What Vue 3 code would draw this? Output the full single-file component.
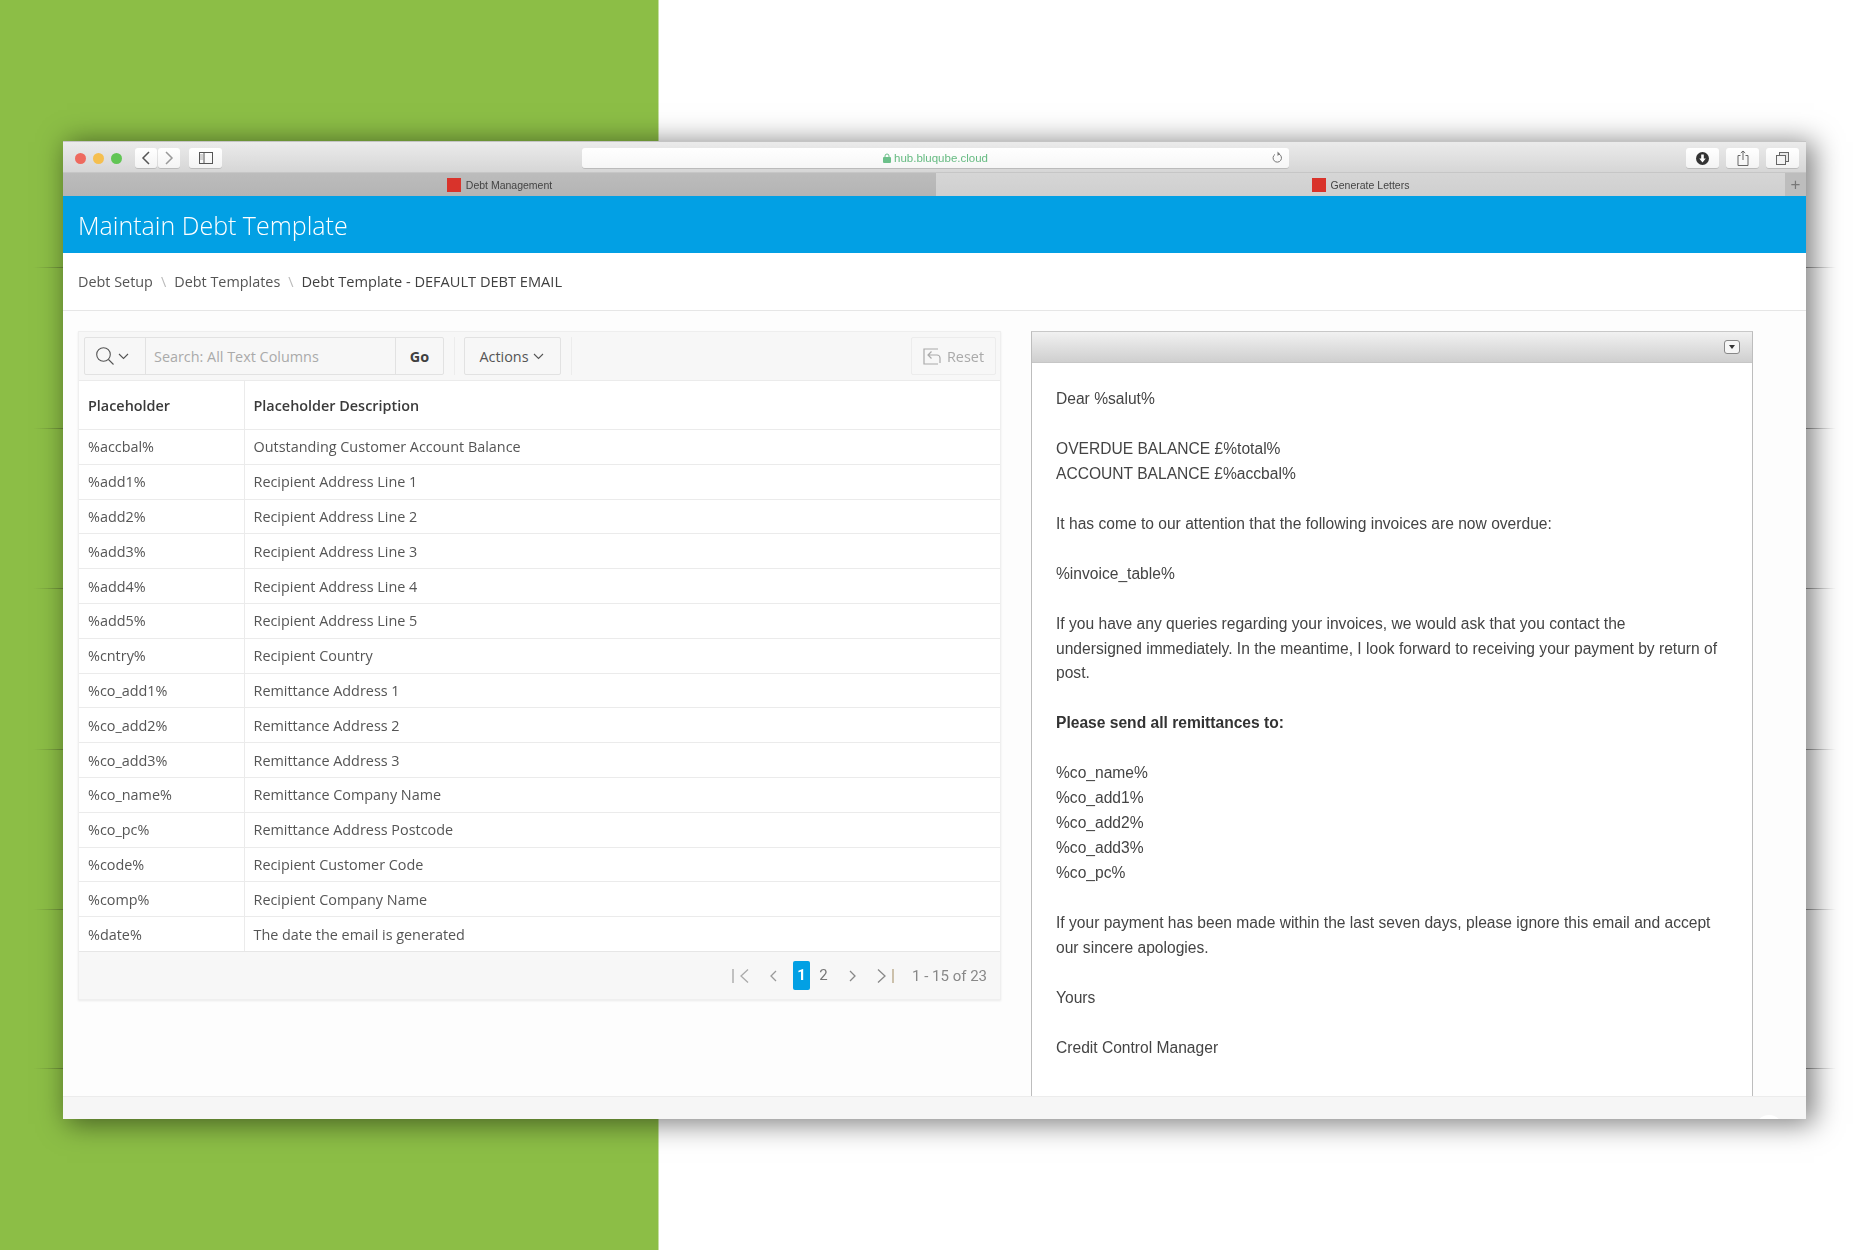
<script setup>
const rows = [
  ['%accbal%', 'Outstanding Customer Account Balance'],
  ['%add1%', 'Recipient Address Line 1'],
  ['%add2%', 'Recipient Address Line 2'],
  ['%add3%', 'Recipient Address Line 3'],
  ['%add4%', 'Recipient Address Line 4'],
  ['%add5%', 'Recipient Address Line 5'],
  ['%cntry%', 'Recipient Country'],
  ['%co_add1%', 'Remittance Address 1'],
  ['%co_add2%', 'Remittance Address 2'],
  ['%co_add3%', 'Remittance Address 3'],
  ['%co_name%', 'Remittance Company Name'],
  ['%co_pc%', 'Remittance Address Postcode'],
  ['%code%', 'Recipient Customer Code'],
  ['%comp%', 'Recipient Company Name'],
  ['%date%', 'The date the email is generated'],
]
const bgLines = [267, 428, 588, 749, 909, 1068]
</script>

<template>
  <div class="page">
    <i v-for="y in bgLines" :key="'l' + y" class="bgline left" :style="{ top: y + 'px' }"></i>
    <i v-for="y in bgLines" :key="'r' + y" class="bgline right" :style="{ top: y + 'px' }"></i>
    <div class="window">
      <div class="chrome">
        <div class="titlebar">
          <div class="lights">
            <span class="light red"></span><span class="light yellow"></span><span class="light green"></span>
          </div>
          <div class="navpair">
            <span class="tbtn nav">
              <svg width="10" height="14" viewBox="0 0 10 14"><path d="M8 1 2 7l6 6" fill="none" stroke="#555" stroke-width="1.5"/></svg>
            </span>
            <span class="tbtn nav">
              <svg width="10" height="14" viewBox="0 0 10 14"><path d="m2 1 6 6-6 6" fill="none" stroke="#999" stroke-width="1.5"/></svg>
            </span>
          </div>
          <span class="tbtn side">
            <svg width="14" height="12" viewBox="0 0 14 12"><rect x=".5" y=".5" width="13" height="11" fill="none" stroke="#555"/><path d="M5 .5v11" stroke="#555"/><path d="M1 3h3M1 5h3M1 7h3" stroke="#aaa"/></svg>
          </span>
          <div class="url">
            <svg width="8" height="10" viewBox="0 0 8 10"><path d="M2 4V3a2 2 0 0 1 4 0v1" fill="none" stroke="#6cc08a"/><rect y="4" width="8" height="6" rx="1" fill="#6cc08a"/></svg>
            <span class="urltext">hub.bluqube.cloud</span>
            <svg class="reload" width="11" height="13" viewBox="0 0 11 13"><path d="M7 3.1A4.2 4.2 0 1 1 3 3.4" fill="none" stroke="#777"/><path d="M5.5 .5 8 3 5.5 5z" fill="#777"/></svg>
          </div>
          <div class="tools">
            <span class="tbtn tool">
              <svg width="13" height="13" viewBox="0 0 13 13"><circle cx="6.5" cy="6.5" r="6.5" fill="#333"/><path d="M5.2 2.5h2.6v4h2L6.5 10.500 3.200 6.500h2z" fill="#fff"/></svg>
            </span>
            <span class="tbtn tool">
              <svg width="12" height="16" viewBox="0 0 12 16"><path d="M3.500 5.500H1v10h10v-10H8.500" fill="none" stroke="#666"/><path d="M6 10V1M3.800 3 6 1l2.200 2" fill="none" stroke="#666"/></svg>
            </span>
            <span class="tbtn tool">
              <svg width="13" height="13" viewBox="0 0 13 13"><rect x="3.500" y=".5" width="9" height="9" fill="#e8e8e8" stroke="#666"/><rect x=".5" y="3.500" width="9" height="9" fill="#f4f4f4" stroke="#666"/></svg>
            </span>
          </div>
        </div>
        <div class="tabs">
          <div class="tab active"><span class="fav"></span><span>Debt Management</span></div>
          <div class="tab second"><span class="fav"></span><span>Generate Letters</span></div>
          <div class="plus">+</div>
        </div>
      </div>

      <header class="banner"><h1>Maintain Debt Template</h1></header>

      <nav class="crumbs">
        <span>Debt Setup</span><em>\</em>
        <span>Debt Templates</span><em>\</em>
        <strong>Debt Template - DEFAULT DEBT EMAIL</strong>
      </nav>

      <main class="content">
        <section class="report">
          <div class="toolbar">
            <div class="search">
              <span class="scope">
                <svg width="20" height="20" viewBox="0 0 20 20"><circle cx="8.500" cy="8.500" r="6.800" fill="none" stroke="#555" stroke-width="1.100"/><path d="m13.500 13.500 5 5" stroke="#555" stroke-width="1.100"/></svg>
                <svg width="11" height="7" viewBox="0 0 11 7"><path d="m1 1 4.500 4.500L10 1" fill="none" stroke="#555" stroke-width="1.100"/></svg>
              </span>
              <span class="sinput">Search: All Text Columns</span>
              <span class="go">Go</span>
            </div>
            <i class="sep first"></i>
            <span class="actions">Actions
              <svg width="11" height="7" viewBox="0 0 11 7"><path d="m1 1 4.500 4.500L10 1" fill="none" stroke="#555" stroke-width="1.100"/></svg>
            </span>
            <i class="sep"></i>
            <span class="reset">
              <svg width="18" height="17" viewBox="0 0 18 17"><path d="M15 1H1v15h14" fill="none" stroke="#aaa" stroke-width="1.200"/><path d="M17 15V10a3 3 0 0 0-3-3H5M8.500 3.500 5 7l3.500 3.500" fill="none" stroke="#aaa" stroke-width="1.200"/></svg>
              Reset
            </span>
          </div>
          <table>
            <thead>
              <tr><th class="c1">Placeholder</th><th>Placeholder Description</th></tr>
            </thead>
            <tbody>
              <tr v-for="r in rows" :key="r[0]"><td class="c1">{{ r[0] }}</td><td>{{ r[1] }}</td></tr>
            </tbody>
          </table>
          <div class="pager">
            <svg width="17" height="14" viewBox="0 0 17 14"><path d="M1 0v14" stroke="#aaa" stroke-width="1.400"/><path d="M16 .5 9 7l7 6.500" fill="none" stroke="#aaa" stroke-width="1.300"/></svg>
            <svg class="p2" width="8" height="12" viewBox="0 0 8 12"><path d="M7 1 2 6l5 5" fill="none" stroke="#999" stroke-width="1.300"/></svg>
            <span class="pnum cur">1</span>
            <span class="pnum">2</span>
            <svg class="p3" width="8" height="12" viewBox="0 0 8 12"><path d="m1 1 5 5-5 5" fill="none" stroke="#888" stroke-width="1.300"/></svg>
            <svg class="p4" width="17" height="14" viewBox="0 0 17 14"><path d="m1 .5 7 6.500-7 6.500" fill="none" stroke="#888" stroke-width="1.300"/><path d="M16 0v14" stroke="#b9a98a" stroke-width="1.400"/></svg>
            <span class="count">1 - 15 of 23</span>
          </div>
        </section>

        <section class="panel">
          <div class="phead">
            <span class="collapse"><i></i></span>
          </div>
          <div class="letter">
            Dear %salut%<br><br>
            OVERDUE BALANCE £%total%<br>
            ACCOUNT BALANCE £%accbal%<br><br>
            It has come to our attention that the following invoices are now overdue:<br><br>
            %invoice_table%<br><br>
            If you have any queries regarding your invoices, we would ask that you contact the<br>
            undersigned immediately. In the meantime, I look forward to receiving your payment by return of<br>
            post.<br><br>
            <b>Please send all remittances to:</b><br><br>
            %co_name%<br>
            %co_add1%<br>
            %co_add2%<br>
            %co_add3%<br>
            %co_pc%<br><br>
            If your payment has been made within the last seven days, please ignore this email and accept<br>
            our sincere apologies.<br><br>
            Yours<br><br>
            Credit Control Manager
          </div>
        </section>
      </main>
      <footer class="foot"></footer>
    </div>
  </div>
</template>

<style>
html, body { margin: 0; padding: 0; background: #fff; }
</style>

<style scoped>
.page {
  position: relative;
  width: 1875px;
  height: 1250px;
  box-sizing: border-box;
  padding: 141px 69px 0 63px;
  overflow: hidden;
  background: linear-gradient(90deg, #8cbe46 0, #8cbe46 658px, #fff 659px);
  font-family: "Open Sans", sans-serif;
  color: #404040;
}
.bgline { position: absolute; height: 1px; width: 30px; }
.bgline.left { left: 33px; background: linear-gradient(90deg, transparent, #6d8f3a); }
.bgline.right { left: 1806px; background: linear-gradient(90deg, #999, transparent); }

.window {
  position: relative;
  height: 978px;
  display: flex;
  flex-direction: column;
  background: #fdfdfd;
  box-shadow: 6px 3px 26px 2px rgba(0, 0, 0, .5);
}

.chrome { filter: blur(.5px); font-family: "Liberation Sans", sans-serif; }
.titlebar {
  height: 32px;
  box-sizing: border-box;
  display: flex;
  align-items: flex-start;
  padding-top: 6px;
  padding-left: 12px;
  background: linear-gradient(#ebebeb, #d6d6d6);
  border-top: 1px solid #c4c4c4;
  border-bottom: 1px solid #c6c6c6;
}
.lights { display: flex; gap: 7px; margin-top: 5px; }
.light { width: 11px; height: 11px; border-radius: 50%; }
.red { background: #ee6a5f; }
.yellow { background: #f5bf4f; }
.green { background: #61c554; }
.tbtn {
  display: flex;
  align-items: center;
  justify-content: center;
  height: 20px;
  box-sizing: border-box;
  background: linear-gradient(#fff, #f3f3f3);
  border-radius: 3px;
  box-shadow: 0 1px 0 #bbb;
}
.navpair { display: flex; gap: 1px; margin-left: 13px; }
.nav { width: 22px; }
.side { width: 33px; margin-left: 9px; }
.url {
  position: relative;
  width: 707px;
  height: 20px;
  margin-left: 360px;
  display: flex;
  align-items: center;
  justify-content: center;
  gap: 3px;
  background: linear-gradient(#fff, #f6f6f6);
  border-radius: 3px;
  box-shadow: 0 1px 0 #bbb;
}
.urltext { font-size: 11.5px; color: #66bb82; }
.reload { position: absolute; right: 6px; top: 3px; }
.tools { display: flex; gap: 7px; margin-left: auto; margin-right: 7px; }
.tool { width: 33px; }

.tabs {
  height: 23px;
  display: flex;
  font-size: 10.5px;
  color: #444;
}
.tab {
  display: flex;
  align-items: center;
  justify-content: center;
  gap: 5px;
  background: linear-gradient(#d6d6d6, #cfcfcf);
}
.tab.active { width: 873px; background: linear-gradient(#bcbcbc, #b4b4b4); }
.tab.second { flex: 1; }
.fav { width: 14px; height: 14px; background: #d9332b; }
.plus {
  width: 21px;
  background: #bdbdbd;
  color: #777;
  font-size: 17px;
  line-height: 23px;
  text-align: center;
}

.banner {
  height: 57px;
  display: flex;
  align-items: center;
  padding-left: 15px;
  background: #02a0e4;
  filter: blur(.3px);
}
.banner h1 {
  margin: 0;
  color: #fff;
  font-size: 25px;
  font-weight: 300;
}

.crumbs {
  height: 58px;
  box-sizing: border-box;
  display: flex;
  align-items: center;
  gap: 8px;
  padding-left: 15px;
  background: #fff;
  border-bottom: 1px solid #e6e6e6;
  font-size: 14.4px;
  color: #555;
  filter: blur(.3px);
}
.crumbs em { font-style: normal; color: #bbb; }
.crumbs strong { font-weight: 400; font-size: 14.6px; color: #404040; margin-top: -2px; }

.content {
  flex: 1;
  min-height: 0;
  display: flex;
  align-items: stretch;
  gap: 30px;
  padding: 20px 0 0 15px;
  overflow: hidden;
  filter: blur(.3px);
}
.report {
  width: 923px;
  height: 669px;
  box-sizing: border-box;
  display: flex;
  flex-direction: column;
  background: #fff;
  border: 1px solid #efefef;
  border-top-color: #eee;
  box-shadow: 0 1px 2px rgba(0, 0, 0, .08);
}
.toolbar {
  height: 49px;
  box-sizing: border-box;
  display: flex;
  align-items: center;
  padding: 0 4px 0 5px;
  background: #f7f7f7;
  border-bottom: 1px solid #ebebeb;
  font-size: 14.4px;
}
.search {
  width: 360px;
  height: 38px;
  box-sizing: border-box;
  display: flex;
  border: 1px solid #e2e2e2;
  border-radius: 2px;
}
.scope {
  width: 61px;
  box-sizing: border-box;
  display: flex;
  align-items: center;
  gap: 3px;
  padding-left: 10px;
  border-right: 1px solid #e2e2e2;
}
.sinput { flex: 1; display: flex; align-items: center; padding-left: 8px; color: #aaa; }
.go {
  width: 47px;
  display: flex;
  align-items: center;
  justify-content: center;
  border-left: 1px solid #e2e2e2;
  font-weight: 700;
  color: #404040;
}
.sep { width: 1px; height: 38px; margin: 0 10px; background: #ececec; }
.sep.first { margin-right: 9px; }
.actions {
  width: 97px;
  height: 38px;
  box-sizing: border-box;
  display: flex;
  align-items: center;
  justify-content: center;
  gap: 4px;
  padding-right: 2px;
  border: 1px solid #e2e2e2;
  border-radius: 2px;
  color: #555;
}
.reset {
  width: 85px;
  height: 38px;
  box-sizing: border-box;
  display: flex;
  align-items: center;
  justify-content: center;
  gap: 6px;
  margin-left: auto;
  border: 1px solid #ececec;
  border-radius: 2px;
  color: #aaa;
}
table {
  width: 100%;
  flex: none;
  border-collapse: collapse;
  table-layout: fixed;
  font-size: 14.4px;
}
th, td {
  box-sizing: border-box;
  padding: 0 0 0 9px;
  text-align: left;
  border-bottom: 1px solid #ebebeb;
}
th { height: 48.5px; font-weight: 600; color: #3a3a3a; }
td { height: 34.8px; color: #555; }
.c1 { width: 165px; border-right: 1px solid #ebebeb; }
tbody tr:last-child td { border-bottom: 0; }
.pager {
  flex: 1;
  display: flex;
  align-items: center;
  justify-content: flex-end;
  padding-right: 13px;
  background: #f7f7f7;
  border-top: 1px solid #e6e6e6;
  font-family: "Roboto", sans-serif;
  font-size: 15px;
  color: #777;
}
.p2 { margin-left: 20px; margin-right: 16px; }
.pnum { width: 17px; height: 29px; line-height: 29px; text-align: center; border-radius: 2px; margin-right: 5px; }
.pnum.cur { background: #02a0e4; color: #fff; font-weight: 700; }
.p3 { margin: 0 20px 0 12px; }
.p4 { margin-right: 18px; }
.count { color: #888; }

.panel {
  width: 722px;
  box-sizing: border-box;
  border: 1px solid #bdbdbd;
  border-bottom: 0;
  border-top-color: #c8c8c8;
  background: #fff;
  font-family: "Liberation Sans", sans-serif;
}
.phead {
  height: 31px;
  box-sizing: border-box;
  display: flex;
  justify-content: flex-end;
  padding: 8px 12px 0 0;
  background: linear-gradient(#f1f1f1, #cfcfcf);
  border-bottom: 1px solid #c6c6c6;
}
.collapse {
  width: 16px;
  height: 14px;
  box-sizing: border-box;
  display: flex;
  align-items: center;
  justify-content: center;
  background: #f6f6f6;
  border: 1px solid #888;
  border-radius: 3px;
}
.collapse i {
  width: 0;
  height: 0;
  border-left: 3.5px solid transparent;
  border-right: 3.5px solid transparent;
  border-top: 4px solid #333;
}
.letter {
  padding: 24px 0 0 24px;
  font-size: 15.6px;
  line-height: 24.96px;
  color: #444;
}
.letter b { color: #333; }
.foot {
  position: relative;
  height: 23px;
  flex: none;
  overflow: hidden;
  background: #f6f6f6;
  border-top: 1px solid #ececec;
  box-sizing: border-box;
}
.foot::after {
  content: "";
  position: absolute;
  right: 23px;
  bottom: -24px;
  width: 28px;
  height: 28px;
  border-radius: 50%;
  background: #fff;
}
</style>
